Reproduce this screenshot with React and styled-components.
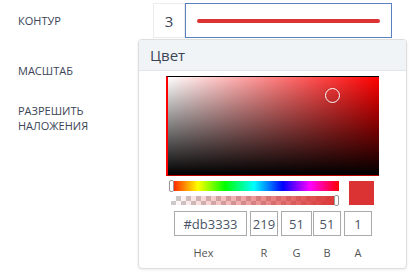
import React from 'react';
import styled, { createGlobalStyle } from 'styled-components';

const color = { r: 219, g: 51, b: 51, a: 1, hex: '#db3333' };

export default function App() {
  return (
    <>
      <GlobalStyle />
      <Form>
        <Row>
          <Label>Контур</Label>
          <Controls>
            <WidthInput>3</WidthInput>
            <StrokeBox>
              <StrokeLine />
            </StrokeBox>
            <ColorPicker />
          </Controls>
        </Row>
        <Row>
          <Label>Масштаб</Label>
        </Row>
        <Row $top>
          <Label>
            Разрешить
            <br />
            наложения
          </Label>
        </Row>
      </Form>
    </>
  );
}

function ColorPicker() {
  return (
    <Popover>
      <PopoverHeader>Цвет</PopoverHeader>
      <PopoverBody>
        <Saturation>
          <SatCursor style={{ left: 157, top: 11 }} />
        </Saturation>
        <SliderRow>
          <Sliders>
            <HueBar>
              <Thumb $pos="left" />
            </HueBar>
            <AlphaBar>
              <Thumb $pos="right" />
            </AlphaBar>
          </Sliders>
          <Swatch />
        </SliderRow>
        <Fields>
          <Field $w={73}>
            <FieldBox>{color.hex}</FieldBox>
            <FieldLabel $shift={-7}>Hex</FieldLabel>
          </Field>
          <Field $w={28} $ml={3}>
            <FieldBox>{color.r}</FieldBox>
            <FieldLabel>R</FieldLabel>
          </Field>
          <Field $w={31} $ml={3}>
            <FieldBox>{color.g}</FieldBox>
            <FieldLabel>G</FieldLabel>
          </Field>
          <Field $w={28} $ml={1}>
            <FieldBox>{color.b}</FieldBox>
            <FieldLabel>B</FieldLabel>
          </Field>
          <Field $w={28} $ml={3}>
            <FieldBox>{color.a}</FieldBox>
            <FieldLabel>A</FieldLabel>
          </Field>
        </Fields>
      </PopoverBody>
    </Popover>
  );
}

const GlobalStyle = createGlobalStyle`
  html, body {
    margin: 0;
    min-height: 100%;
    background: #fff;
    font-family: "Open Sans", "Liberation Sans", sans-serif;
  }
`;

const Form = styled.div`
  min-height: 276px;
  padding-top: 3px;
  display: flex;
  flex-direction: column;
  gap: 15px;
`;

const Row = styled.div`
  display: flex;
  align-items: ${p => (p.$top ? 'flex-start' : 'center')};
  min-height: ${p => (p.$top ? 30 : 35)}px;
`;

const Label = styled.div`
  width: 135px;
  padding-left: 18px;
  font-size: 11px;
  line-height: 15px;
  text-transform: uppercase;
  color: #3b4556;
`;

const Controls = styled.div`
  position: relative;
  display: flex;
  height: 35px;
`;

const WidthInput = styled.div`
  width: 30px;
  border: 1px solid #ececec;
  display: flex;
  align-items: center;
  justify-content: center;
  font-size: 15px;
  color: #3b4556;
`;

const StrokeBox = styled.div`
  width: 207px;
  box-sizing: border-box;
  border: 1px solid #5b80c0;
  display: flex;
  align-items: center;
  padding: 0 11px;
`;

const StrokeLine = styled.div`
  flex: 1;
  height: 4px;
  border-radius: 2px;
  background: #db3333;
`;

const Popover = styled.div`
  position: absolute;
  left: -15px;
  top: 36px;
  width: 267px;
  height: 228px;
  border: 1px solid #dedede;
  border-radius: 4px;
  background: #fff;
  box-shadow: 0 1px 3px rgba(0, 0, 0, 0.08);
  overflow: hidden;
  z-index: 2;
`;

const PopoverHeader = styled.div`
  height: 30px;
  background: #f1f4f7;
  border-bottom: 1px solid #e2e5e9;
  display: flex;
  align-items: center;
  padding-left: 11px;
  font-size: 15px;
  color: #3b4556;
`;

const PopoverBody = styled.div`
  padding: 5px 0 0 27px;
`;

const Saturation = styled.div`
  position: relative;
  width: 213px;
  height: 100px;
  box-sizing: border-box;
  border-top: 1px solid #000;
  border-left: 2px solid #f00;
  border-bottom: 1px solid #b00;
  background:
    linear-gradient(to top, #000, rgba(0, 0, 0, 0)),
    linear-gradient(to right, #fff, rgba(255, 255, 255, 0)),
    #f00;
`;

const SatCursor = styled.div`
  position: absolute;
  width: 13px;
  height: 13px;
  border: 1.5px solid #fff;
  border-radius: 50%;
  box-shadow: 0 0 1px rgba(0, 0, 0, 0.4);
`;

const SliderRow = styled.div`
  display: flex;
  gap: 10px;
  padding: 5px 0 0 3px;
`;

const Sliders = styled.div`
  width: 170px;
  display: flex;
  flex-direction: column;
  gap: 5px;
`;

const HueBar = styled.div`
  position: relative;
  height: 10px;
  background: linear-gradient(
    to right,
    #f00 0%,
    #ff0 17%,
    #0f0 33%,
    #0ff 50%,
    #00f 67%,
    #f0f 83%,
    #f00 100%
  );
`;

const AlphaBar = styled.div`
  position: relative;
  height: 9px;
  margin-left: 2px;
  background:
    linear-gradient(to right, rgba(219, 51, 51, 0), rgba(219, 51, 51, 1)),
    conic-gradient(#ccc 25%, #fff 0 50%, #ccc 0 75%, #fff 0) 0 0 / 10px 10px;
`;

const Thumb = styled.div`
  position: absolute;
  top: -1px;
  ${p => (p.$pos === 'left' ? 'left: 0;' : 'right: 0;')}
  width: 3px;
  height: ${p => (p.$pos === 'left' ? 10 : 9)}px;
  background: #fff;
  border: 1px solid #999;
  border-radius: 2px;
`;

const Swatch = styled.div`
  width: 25px;
  height: 24px;
  background: #db3333;
`;

const Fields = styled.div`
  display: flex;
  padding: 6px 0 0 8px;
`;

const Field = styled.div`
  width: ${p => p.$w}px;
  margin-left: ${p => p.$ml || 0}px;
  display: flex;
  flex-direction: column;
  align-items: center;
`;

const FieldBox = styled.div`
  width: 100%;
  height: 25px;
  box-sizing: border-box;
  border: 1px solid #aaa;
  display: flex;
  align-items: center;
  justify-content: center;
  font-size: 13px;
  color: #4a5466;
`;

const FieldLabel = styled.div`
  margin-top: 9px;
  font-size: 11px;
  color: #555;
  transform: translateX(${p => p.$shift || 0}px);
`;
